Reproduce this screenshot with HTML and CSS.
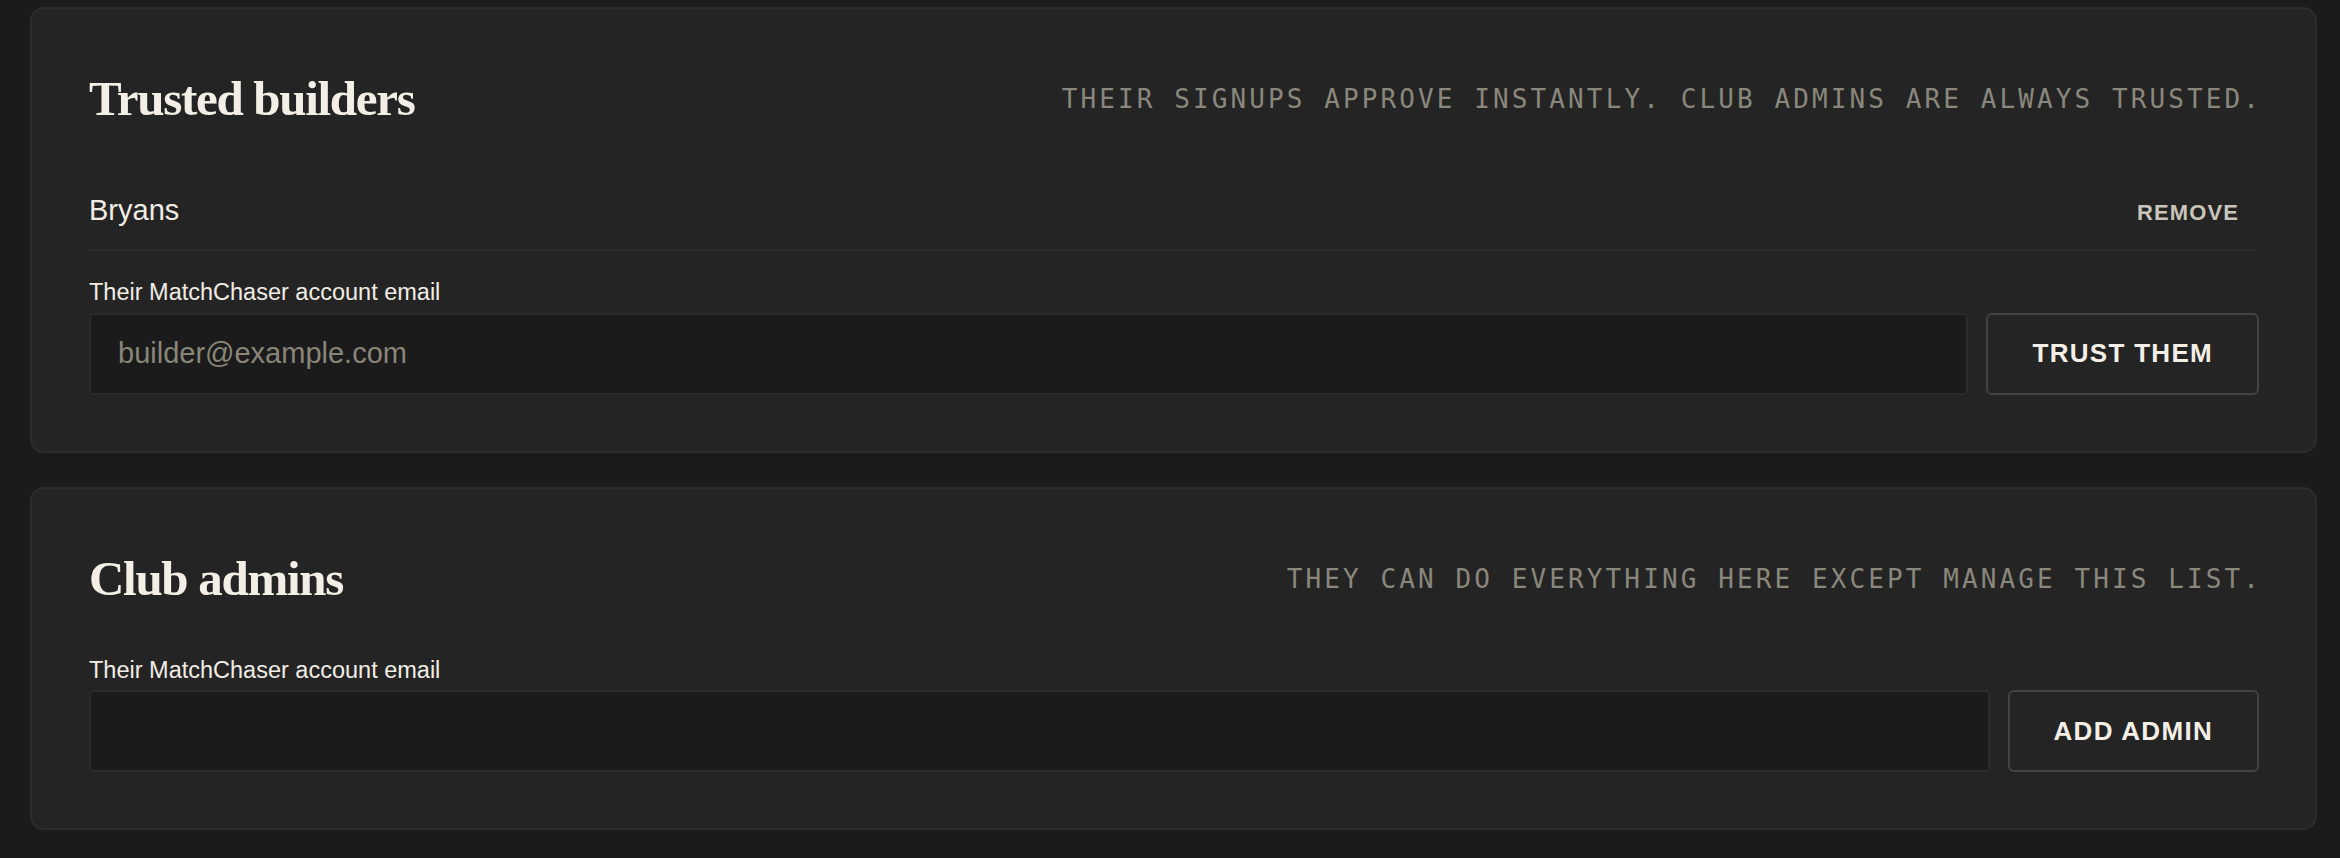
FILE: index.html
```html
<!DOCTYPE html>
<html lang="en">
<head>
<meta charset="utf-8">
<title>Trusted builders</title>
<link rel="stylesheet" href="styles.css">
</head>
<body>
<main class="page">
  <section class="card">
    <header class="card-head">
      <h2 class="card-title">Trusted builders</h2>
      <p class="card-note">Their signups approve instantly. Club admins are always trusted.</p>
    </header>
    <ul class="member-list">
      <li class="member">
        <span class="member-name">Bryans</span>
        <button class="link-btn" type="button">Remove</button>
      </li>
    </ul>
    <form class="add-form">
      <label class="field-label" for="builder-email">Their MatchChaser account email</label>
      <div class="field-row">
        <input class="text-input" id="builder-email" type="email" placeholder="builder@example.com">
        <button class="outline-btn" type="button">Trust them</button>
      </div>
    </form>
  </section>

  <section class="card">
    <header class="card-head">
      <h2 class="card-title">Club admins</h2>
      <p class="card-note">They can do everything here except manage this list.</p>
    </header>
    <form class="add-form">
      <label class="field-label" for="admin-email">Their MatchChaser account email</label>
      <div class="field-row">
        <input class="text-input" id="admin-email" type="email">
        <button class="outline-btn" type="button">Add admin</button>
      </div>
    </form>
  </section>
</main>
</body>
</html>
```

FILE: styles.css
```css
* { box-sizing: border-box; }

html, body {
  margin: 0;
  background: #1b1b1b;
}

body {
  font-family: "Liberation Sans", Arial, sans-serif;
  color: #f1ede4;
}

.page {
  display: flex;
  flex-direction: column;
  gap: 34px;
  padding: 7px 23px 0 30px;
}

.card {
  background: #242424;
  border: 2px solid #2c2c2c;
  border-radius: 14px;
  padding: 58px 56px 56px 57px;
}

.card-head {
  display: flex;
  align-items: center;
  justify-content: space-between;
  height: 64px;
  margin-bottom: 46px;
}

.card-title {
  margin: 0;
  font-family: "Liberation Serif", "Times New Roman", serif;
  font-weight: 700;
  font-size: 49px;
  line-height: 64px;
  letter-spacing: -1.3px;
  color: #f3efe6;
}

.card-note {
  margin: 0 -3px 0 0;
  font-family: "DejaVu Sans Mono", "Liberation Mono", monospace;
  font-size: 26px;
  letter-spacing: 3.1px;
  text-transform: uppercase;
  color: #8a877c;
}

.member-list {
  list-style: none;
  margin: 0 0 28px;
  padding: 0;
}

.member {
  display: flex;
  align-items: baseline;
  justify-content: space-between;
  padding: 15px 0;
  border-bottom: 2px solid #2b2b2b;
}

.member-name {
  font-size: 29px;
  color: #f1ede4;
}

.link-btn {
  background: none;
  border: none;
  padding: 8px 20px;
  font-family: "Liberation Sans", Arial, sans-serif;
  font-weight: 700;
  font-size: 22px;
  letter-spacing: 1.1px;
  text-transform: uppercase;
  color: #c9c5ba;
  cursor: pointer;
}

.add-form {
  display: flex;
  flex-direction: column;
}

.field-label {
  font-size: 23.5px;
  line-height: 27px;
  margin-bottom: 6.5px;
  color: #f1ede4;
}

.field-row {
  display: flex;
  gap: 18px;
}

.text-input {
  flex: 1;
  height: 82px;
  background: #1b1b1b;
  border: 2px solid #2b2b2b;
  border-radius: 5px;
  padding: 0 27px;
  font-family: "Liberation Sans", Arial, sans-serif;
  font-size: 29px;
  color: #f1ede4;
  outline: none;
}

.text-input::placeholder {
  color: #898679;
}

.outline-btn {
  height: 82px;
  background: #242424;
  border: 2px solid #424242;
  border-radius: 6px;
  padding: 0 44px;
  font-family: "Liberation Sans", Arial, sans-serif;
  font-weight: 700;
  font-size: 26px;
  letter-spacing: 1.3px;
  text-transform: uppercase;
  color: #f3efe6;
  cursor: pointer;
}
```
